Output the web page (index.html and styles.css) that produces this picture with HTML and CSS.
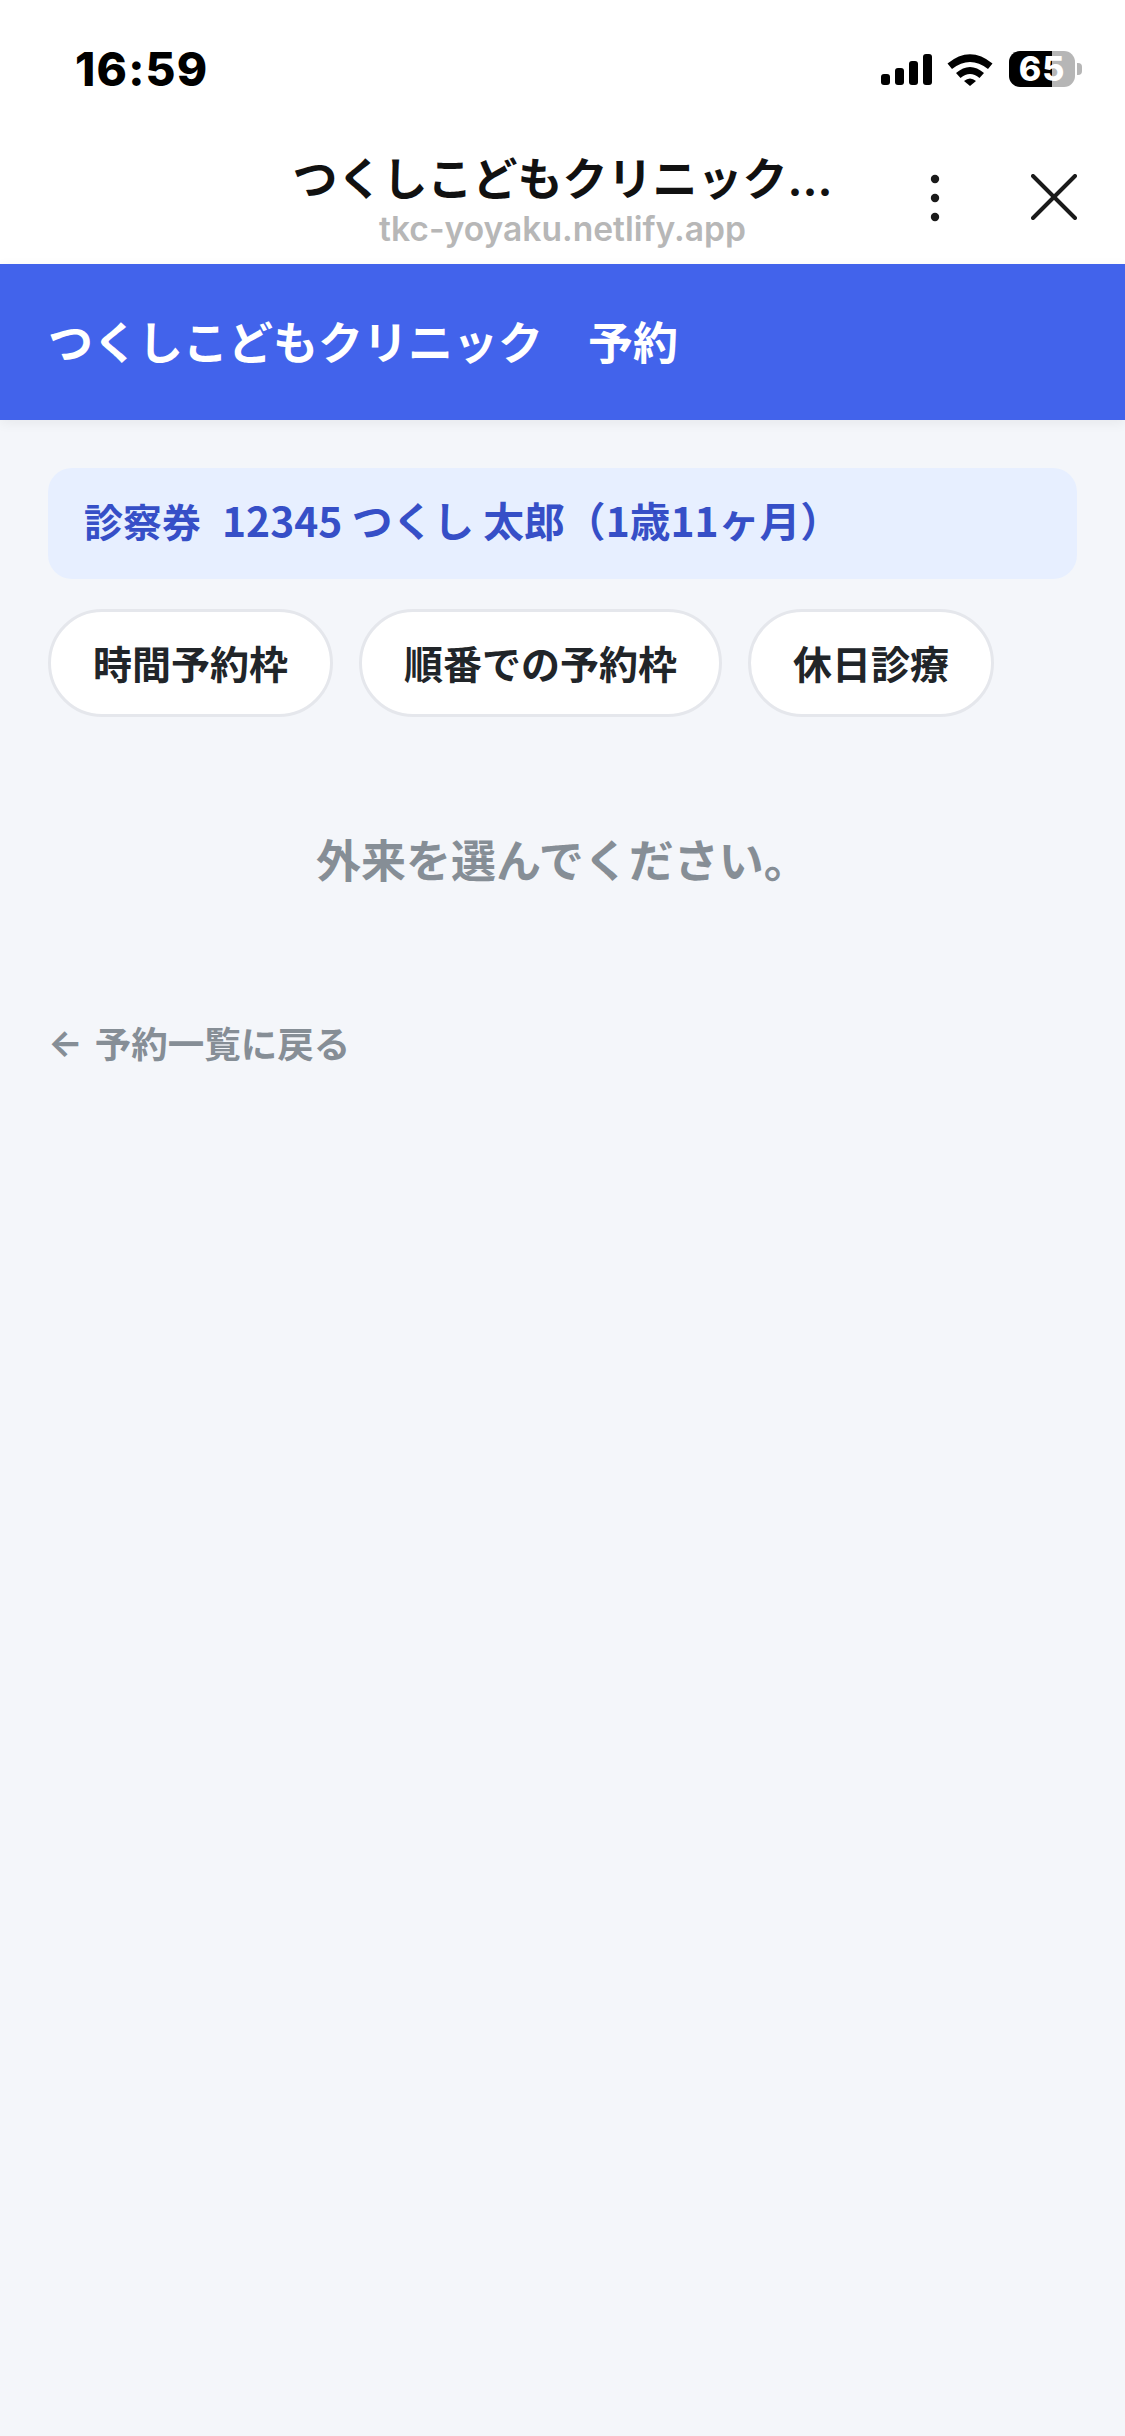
FILE: index.html
```html
<!DOCTYPE html>
<html lang="ja">
<head>
    <meta charset="UTF-8">
    <meta name="viewport" content="width=device-width, initial-scale=1.0">
    <title>つくしこどもクリニック 予約</title>
    <link rel="stylesheet" href="styles.css">
</head>
<body>
    <div class="status-bar">
        <span class="status-time">16:59</span>
        <div class="status-icons">
            <svg class="icon-signal" width="51" height="31" viewBox="0 0 51 31">
                <rect x="0" y="20" width="9" height="11" rx="3"/>
                <rect x="14" y="14" width="9" height="17" rx="3"/>
                <rect x="28" y="7" width="9" height="24" rx="3"/>
                <rect x="42" y="0" width="9" height="31" rx="3"/>
            </svg>
            <svg class="icon-wifi" width="46" height="33" viewBox="0 0 46 33">
                <path d="M0.5 10.5 Q23 -8 45.5 10.5 L41 16 Q23 2 5 16 Z"/>
                <path d="M9 20 Q23 8 37 20 L32.5 25 Q23 17 13.5 25 Z"/>
                <path d="M17 28 Q23 23 29 28 L23 33 Z"/>
            </svg>
            <div class="battery">
                <div class="battery-body">
                    <div class="battery-level"></div>
                    <span class="battery-text">65</span>
                </div>
                <div class="battery-nub"></div>
            </div>
        </div>
    </div>

    <div class="nav-bar">
        <div></div>
        <div class="nav-title">
            <div class="nav-name">つくしこどもクリニック<span class="nav-dots">...</span></div>
            <div class="nav-url">tkc-yoyaku.netlify.app</div>
        </div>
        <div class="nav-actions">
            <svg width="10" height="48" viewBox="0 0 10 48" fill="#1a1a1a">
                <circle cx="5" cy="5" r="4.2"/>
                <circle cx="5" cy="24" r="4.2"/>
                <circle cx="5" cy="43" r="4.2"/>
            </svg>
            <svg width="46" height="46" viewBox="0 0 46 46" stroke="#1a1a1a" stroke-width="4" stroke-linecap="round">
                <path d="M2 2 L44 44"/>
                <path d="M44 2 L2 44"/>
            </svg>
        </div>
    </div>

    <header class="app-header">つくしこどもクリニック　予約</header>

    <main class="content">
        <div class="patient-box"><span class="patient-label">診察券</span><span class="patient-name">12345 つくし 太郎（1歳11ヶ月）</span></div>

        <div class="pill-row">
            <button class="pill">時間予約枠</button>
            <button class="pill">順番での予約枠</button>
            <button class="pill">休日診療</button>
        </div>

        <p class="empty-message">外来を選んでください。</p>

        <a class="back-link"><span class="back-arrow">←</span>予約一覧に戻る</a>
    </main>
</body>
</html>
```

FILE: styles.css
```css
* {
    box-sizing: border-box;
}

html, body {
    margin: 0;
    padding: 0;
    height: 100%;
}

body {
    display: flex;
    flex-direction: column;
    background-color: #f4f6fa;
    font-family: "Noto Sans CJK JP", "Noto Sans", sans-serif;
    overflow: hidden;
}

/* status bar */
.status-bar {
    height: 138px;
    background-color: #fff;
    display: flex;
    justify-content: space-between;
    align-items: center;
    padding: 0 43px 0 75px;
    flex-shrink: 0;
}

.status-time {
    font-family: Inter, "Liberation Sans", sans-serif;
    font-size: 46px;
    font-weight: 800;
    letter-spacing: 1.2px;
    color: #000;
}

.status-icons {
    display: flex;
    align-items: center;
    gap: 15px;
}

.icon-wifi {
    margin-right: 1px;
}

.battery {
    display: flex;
    align-items: center;
    gap: 2px;
}

.battery-body {
    position: relative;
    width: 66px;
    height: 36px;
    border-radius: 11px;
    background: linear-gradient(to right, #000 43px, #b6b6b6 43px);
    display: flex;
    align-items: center;
    justify-content: center;
}

.battery-text {
    font-family: Inter, "Liberation Sans", sans-serif;
    font-size: 34px;
    font-weight: 800;
    letter-spacing: 1px;
    color: #fff;
    line-height: 1;
}

.battery-nub {
    width: 5px;
    height: 12px;
    background-color: #b6b6b6;
    border-radius: 0 4px 4px 0;
}

/* in-app browser bar */
.nav-bar {
    height: 126px;
    background-color: #fff;
    display: grid;
    grid-template-columns: 1fr auto 1fr;
    flex-shrink: 0;
}

.nav-title {
    display: flex;
    flex-direction: column;
    align-items: center;
    padding-top: 11px;
}

.nav-name {
    font-size: 45px;
    font-weight: 700;
    line-height: 56px;
    color: #111;
}

.nav-dots {
    font-family: Inter, "Liberation Sans", sans-serif;
}

.nav-url {
    font-family: Inter, "Liberation Sans", sans-serif;
    font-size: 33.6px;
    font-weight: 600;
    line-height: 42px;
    color: #b7b7b7;
}

.nav-actions {
    display: flex;
    justify-content: flex-end;
    align-items: flex-start;
    padding: 36px 48px 0 0;
    gap: 91px;
}

/* page */
.app-header {
    height: 156px;
    background-color: #4263eb;
    color: #fff;
    font-size: 45px;
    font-weight: 700;
    display: flex;
    align-items: center;
    padding: 0 48px 3px;
    box-shadow: 0 3px 12px rgba(0, 0, 0, 0.06);
    flex-shrink: 0;
}

.content {
    padding: 48px;
}

.patient-box {
    height: 111px;
    display: flex;
    align-items: center;
    padding: 0 36px 8px;
    background-color: #e7efff;
    border-radius: 24px;
    color: #364fc7;
    font-size: 39px;
    font-weight: 700;
    white-space: pre;
}

.patient-label {
    margin-right: 21px;
}

.patient-name {
    font-size: 40.8px;
}

.pill-row {
    display: flex;
    gap: 26px;
    margin-top: 30px;
}

.pill {
    height: 108px;
    padding: 0 42px 2px;
    background-color: #fff;
    border: 3px solid #e5e7ec;
    border-radius: 54px;
    color: #212529;
    font-family: inherit;
    font-size: 39px;
    font-weight: 700;
}

.empty-message {
    margin: 109px 0 0;
    text-align: center;
    color: #868e96;
    font-size: 45px;
    font-weight: 700;
}

.back-link {
    display: flex;
    align-items: center;
    margin-top: 125px;
    color: #868e96;
    font-size: 36.5px;
    font-weight: 700;
}

.back-arrow {
    font-family: Inter, "Liberation Sans", sans-serif;
    margin-right: 12px;
}
```
